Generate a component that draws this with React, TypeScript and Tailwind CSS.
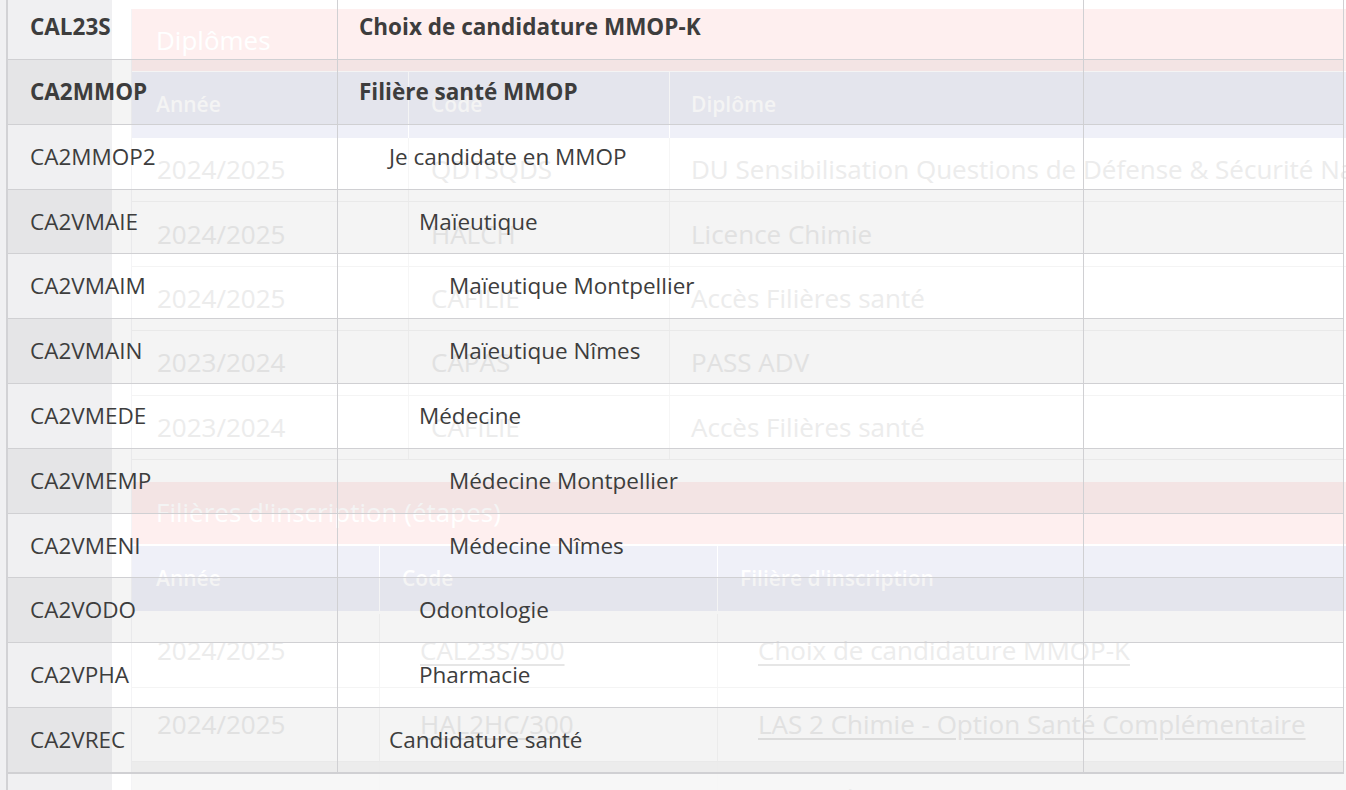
import React from 'react';

type Choice = { code: string; label: string; level: number; bold?: boolean };

const choices: Choice[] = [
  { code: 'CAL23S', label: 'Choix de candidature MMOP-K', level: 0, bold: true },
  { code: 'CA2MMOP', label: 'Filière santé MMOP', level: 0, bold: true },
  { code: 'CA2MMOP2', label: 'Je candidate en MMOP', level: 1 },
  { code: 'CA2VMAIE', label: 'Maïeutique', level: 2 },
  { code: 'CA2VMAIM', label: 'Maïeutique Montpellier', level: 3 },
  { code: 'CA2VMAIN', label: 'Maïeutique Nîmes', level: 3 },
  { code: 'CA2VMEDE', label: 'Médecine', level: 2 },
  { code: 'CA2VMEMP', label: 'Médecine Montpellier', level: 3 },
  { code: 'CA2VMENI', label: 'Médecine Nîmes', level: 3 },
  { code: 'CA2VODO', label: 'Odontologie', level: 2 },
  { code: 'CA2VPHA', label: 'Pharmacie', level: 2 },
  { code: 'CA2VREC', label: 'Candidature santé', level: 1 },
];

const indent = ['pl-[21px]', 'pl-[51px]', 'pl-[81px]', 'pl-[111px]'];

const diplomes = [
  ['2024/2025', 'QDTSQDS', 'DU Sensibilisation Questions de Défense & Sécurité Nationale'],
  ['2024/2025', 'HALCH', 'Licence Chimie'],
  ['2024/2025', 'CAFILIE', 'Accès Filières santé'],
  ['2023/2024', 'CAPAS', 'PASS ADV'],
  ['2023/2024', 'CAFILIE', 'Accès Filières santé'],
];

const etapes = [
  ['2024/2025', 'CAL23S/500', 'Choix de candidature MMOP-K'],
  ['2024/2025', 'HAL2HC/300', 'LAS 2 Chimie - Option Santé Complémentaire'],
  ['2024/2025', 'HAL2HC/200', 'LAS 2 Chimie'],
];

function SectionTitle({ children }: { children: React.ReactNode }) {
  return (
    <div className="flex h-[62px] items-center bg-[#feefef] pl-6 text-[26px] text-white">
      {children}
    </div>
  );
}

function BackgroundPage() {
  return (
    <div className="flex h-[790px] w-[1346px]">
      <div className="w-[112px] shrink-0 bg-[#f0f0f2]" />
      <div className="min-w-0 flex-1 bg-white pl-[19px] pt-[9px]">
        <div className="w-[1260px] border-l border-[#f4f4f6]">
          <SectionTitle>Diplômes</SectionTitle>
          <div className="mt-px grid h-[66px] grid-cols-[277px_261px_1fr] bg-[#eff0f8] text-[21px] font-semibold text-white">
            <div className="flex items-center border-r border-white pl-6">Année</div>
            <div className="flex items-center border-r border-white pl-[22px]">Code</div>
            <div className="flex items-center pl-[21px]">Diplôme</div>
          </div>
          {diplomes.map((d, i) => (
            <div
              key={i}
              className="grid h-[64.4px] grid-cols-[277px_261px_1fr] border-b border-[#f4f4f4] text-[26px] whitespace-nowrap text-[#ececec]"
            >
              <div className="flex items-center border-r border-[#f6f6f6] pl-[25px]">{d[0]}</div>
              <div className="flex items-center border-r border-[#f6f6f6] pl-[22px]">{d[1]}</div>
              <div className="flex items-center pl-[21px]">{d[2]}</div>
            </div>
          ))}

          <div className="mt-[22px]">
            <SectionTitle>Filières d'inscription (étapes)</SectionTitle>
          </div>
          <div className="mt-[2px] grid h-[65px] grid-cols-[248px_338px_1fr] bg-[#eff0f8] text-[21px] font-semibold text-white">
            <div className="flex items-center border-r border-white pl-6">Année</div>
            <div className="flex items-center border-r border-white pl-[22px]">Code</div>
            <div className="flex items-center pl-[22px]">Filière d'inscription</div>
          </div>
          <div className="pt-[3px]">
            {etapes.map((e, i) => (
              <div
                key={i}
                className={
                  'grid h-[74px] grid-cols-[248px_338px_1fr] border-b border-[#f4f4f4] text-[26px] whitespace-nowrap text-[#ececec] ' +
                  (i === 2 ? 'bg-[#f7f7f7]' : 'bg-white')
                }
              >
                <div className="flex items-center border-r border-[#f6f6f6] pl-[25px]">{e[0]}</div>
                <div className="flex items-center border-r border-[#f6f6f6] pl-[40px]">
                  <span className="underline decoration-[#e6e6e6] underline-offset-4">{e[1]}</span>
                </div>
                <div className="flex items-center pl-[40px]">
                  <span className="underline decoration-[#e6e6e6] underline-offset-4">{e[2]}</span>
                </div>
              </div>
            ))}
          </div>
        </div>
      </div>
    </div>
  );
}

function ChoiceList() {
  return (
    <div className="absolute left-[6px] top-0 h-[790px] border-l-2 border-[#d2d2d5]">
      <div className="-mt-[4.8px]">
        {choices.map((c, i) => (
          <div
            key={c.code}
            className={
              'flex h-[64.8px] border-b border-[#d0d0d3] text-[22.5px] text-[#3d3d3d] ' +
              (i % 2 === 1 ? 'bg-black/[0.043] ' : '') +
              (c.bold ? 'font-bold ' : '') +
              (i === choices.length - 1 ? 'h-[65.8px] border-b-2' : '')
            }
          >
            <div className="flex w-[330px] items-center border-r border-[#d0d0d3] pl-[22px]">{c.code}</div>
            <div className={'flex w-[746px] items-center border-r border-[#d0d0d3] whitespace-nowrap ' + indent[c.level]}>
              {c.label}
            </div>
            <div className="w-[260px] border-r border-[#d0d0d3]" />
          </div>
        ))}
      </div>
    </div>
  );
}

export default function App() {
  return (
    <div className="relative h-[790px] w-[1346px] overflow-hidden font-['Open_Sans',sans-serif]">
      <BackgroundPage />
      <ChoiceList />
    </div>
  );
}
